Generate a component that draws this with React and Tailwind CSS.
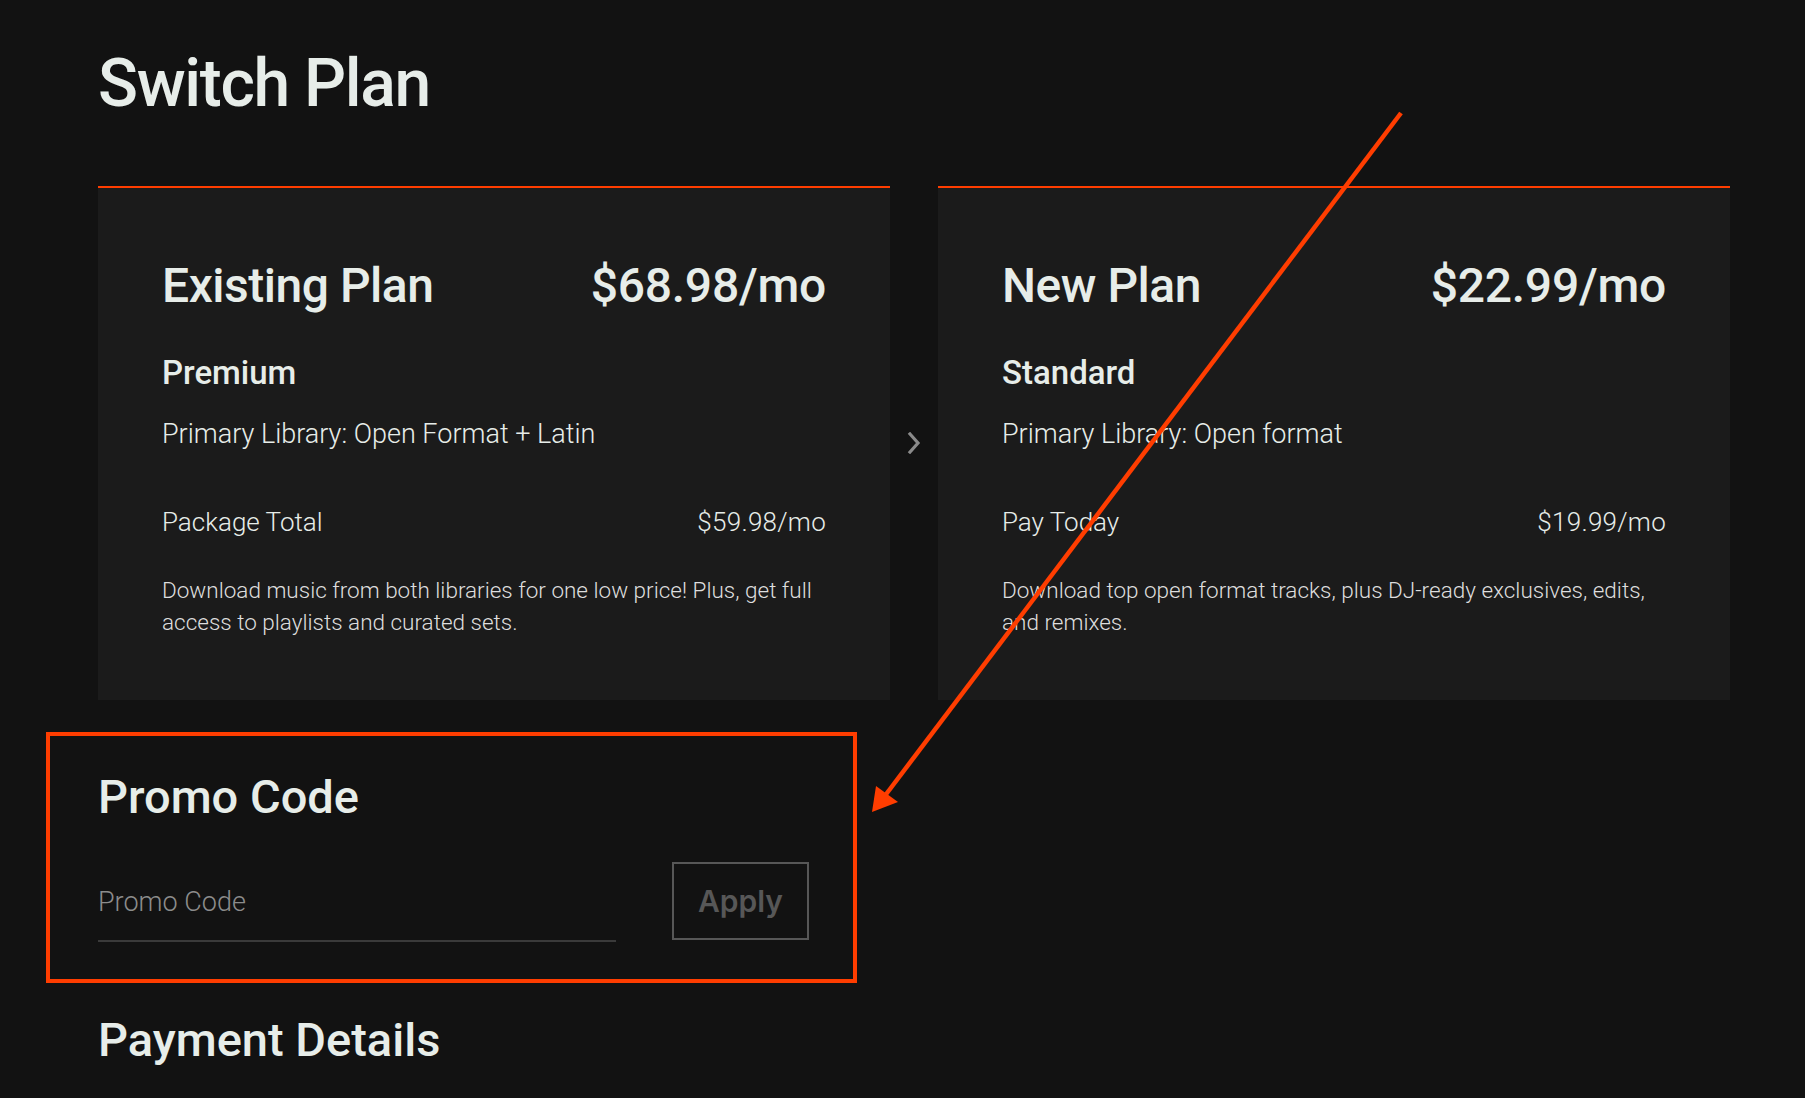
import React from "react";

function PlanCard({ title, price, tier, library, rowLabel, rowPrice, desc }) {
  return (
    <div className="bg-[#1b1b1b] border-t-2 border-[#ff3d00] px-16 pt-[74px] h-[514px]">
      <div className="flex items-baseline justify-between">
        <h2 className="text-[48px] leading-[48px] font-medium tracking-[-0.01em]">{title}</h2>
        <div className="text-[48px] leading-[48px] font-medium tracking-[-0.005em]">{price}</div>
      </div>
      <div className="mt-[46px] text-[33px] leading-[33px] font-medium">{tier}</div>
      <div className="mt-[30px] text-[27px] leading-[30px] font-light">{library}</div>
      <div className="mt-[58px] flex justify-between text-[26px] leading-[30px] font-light">
        <span>{rowLabel}</span>
        <span className="tracking-[0.01em]">{rowPrice}</span>
      </div>
      <p className="mt-[37px] text-[22.5px] leading-[32px] font-light text-[#dedede]">{desc}</p>
    </div>
  );
}

export default function App() {
  return (
    <div className="relative min-h-screen w-full bg-[#121212] text-[#e7ede9] font-['Roboto',sans-serif] overflow-hidden">
      <div className="pl-[98px] pt-[51px] pb-[40px]">
        <h1 className="text-[66px] leading-[66px] font-medium tracking-[-0.02em]">Switch Plan</h1>

        <div className="mt-[69px] grid grid-cols-[792px_48px_792px] items-stretch">
          <PlanCard
            title="Existing Plan"
            price="$68.98/mo"
            tier="Premium"
            library="Primary Library: Open Format + Latin"
            rowLabel="Package Total"
            rowPrice="$59.98/mo"
            desc="Download music from both libraries for one low price! Plus, get full access to playlists and curated sets."
          />
          <div className="flex items-center justify-center">
            <svg width="14" height="22" viewBox="0 0 14 22" fill="none">
              <path d="M3 2 L11 11 L3 20" stroke="#8a8a8a" strokeWidth="3.2" strokeLinecap="square" />
            </svg>
          </div>
          <PlanCard
            title="New Plan"
            price="$22.99/mo"
            tier="Standard"
            library="Primary Library: Open format"
            rowLabel="Pay Today"
            rowPrice="$19.99/mo"
            desc="Download top open format tracks, plus DJ-ready exclusives, edits, and remixes."
          />
        </div>

        <div className="mt-[32px] -ml-[52px] w-[811px] border-4 border-[#ff3d00] pl-[48px] pr-[44px] pt-[38px] pb-[37px]">
          <h2 className="text-[47px] leading-[46px] font-medium">Promo Code</h2>
          <div className="mt-[42px] flex items-end gap-[56px]">
            <div className="w-[518px] border-b-2 border-[#3a3a3a] pb-[22px]">
              <input
                className="w-full bg-transparent outline-none text-[27px] leading-[30px] font-light text-[#e7ede9] placeholder:text-[#8c8c8c]"
                placeholder="Promo Code"
              />
            </div>
            <button className="w-[137px] h-[78px] border-2 border-[#575757] text-[#575757] text-[30px] font-semibold font-['Inter',sans-serif] mb-[2px]">
              Apply
            </button>
          </div>
        </div>

        <h2 className="mt-[34px] text-[47px] leading-[46px] font-medium">Payment Details</h2>
      </div>

      <svg className="absolute inset-0 pointer-events-none" width="1805" height="1098" viewBox="0 0 1805 1098">
        <line x1="1401" y1="113" x2="884" y2="797" stroke="#ff3d00" strokeWidth="4.5" />
        <polygon points="872,812 876,786 898,802" fill="#ff3d00" />
      </svg>
    </div>
  );
}
